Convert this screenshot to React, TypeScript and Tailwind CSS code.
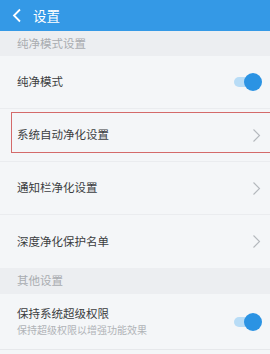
import React from "react";

const Toggle = () => (
  <div className="relative h-[18px] w-[30px]">
    <div className="absolute left-[2px] top-[4px] h-[10px] w-[24px] rounded-full bg-[#b8dcf6]" />
    <div className="absolute right-0 top-0 h-[18px] w-[18px] rounded-full bg-[#2b93e3]" />
  </div>
);

const Chevron = () => (
  <svg width="9" height="15" viewBox="0 0 9 15" fill="none">
    <path d="M1.5 1.5 L7.5 7.5 L1.5 13.5" stroke="#b4b8bd" strokeWidth="1.1" />
  </svg>
);

export default function App() {
  const font = { fontFamily: '"Noto Sans CJK SC", "Noto Sans", sans-serif' };
  return (
    <div className="relative flex h-[354px] w-[270px] flex-col overflow-hidden bg-[#f4f6f8]" style={font}>
      <div className="flex h-[31px] items-center bg-[#3499e6] pl-[12px]">
        <svg width="10" height="15" viewBox="0 0 10 15" fill="none">
          <path d="M8 1.5 L2 7.5 L8 13.5" stroke="#ffffff" strokeWidth="1.8" />
        </svg>
        <span className="ml-[11px] text-[13.5px] leading-none text-white">设置</span>
      </div>
      <div className="flex h-[25px] items-center bg-[#eceef1] pl-[17px] text-[11.5px] text-[#a9acb0]">纯净模式设置</div>
      <div className="flex h-[53px] items-center justify-between border-b border-[#eaecef] pl-[17px] pr-[8px]">
        <span className="text-[11.5px] text-[#3b3d40]">纯净模式</span>
        <Toggle />
      </div>
      <div className="relative flex h-[53px] items-center justify-between border-b border-[#eaecef] pl-[17px] pr-[9px]">
        <span className="text-[11.5px] text-[#3b3d40]">系统自动净化设置</span>
        <Chevron />
        <div className="absolute left-[11px] right-[-2px] top-[3px] h-[41px] border-[1.5px] border-[#d46a6a]" />
      </div>
      <div className="flex h-[53px] items-center justify-between border-b border-[#eaecef] pl-[17px] pr-[9px]">
        <span className="text-[11.5px] text-[#3b3d40]">通知栏净化设置</span>
        <Chevron />
      </div>
      <div className="flex h-[53px] items-center justify-between pl-[17px] pr-[9px]">
        <span className="text-[11.5px] text-[#3b3d40]">深度净化保护名单</span>
        <Chevron />
      </div>
      <div className="flex h-[26px] items-center bg-[#eceef1] pl-[17px] text-[11.5px] text-[#a9acb0]">其他设置</div>
      <div className="flex h-[56px] items-center justify-between border-b border-[#e6e8eb] pl-[17px] pr-[8px]">
        <div className="flex flex-col">
          <span className="text-[11.5px] leading-[17px] text-[#3b3d40]">保持系统超级权限</span>
          <span className="text-[10px] leading-[16px] text-[#b0b3b7]">保持超级权限以增强功能效果</span>
        </div>
        <Toggle />
      </div>
    </div>
  );
}
